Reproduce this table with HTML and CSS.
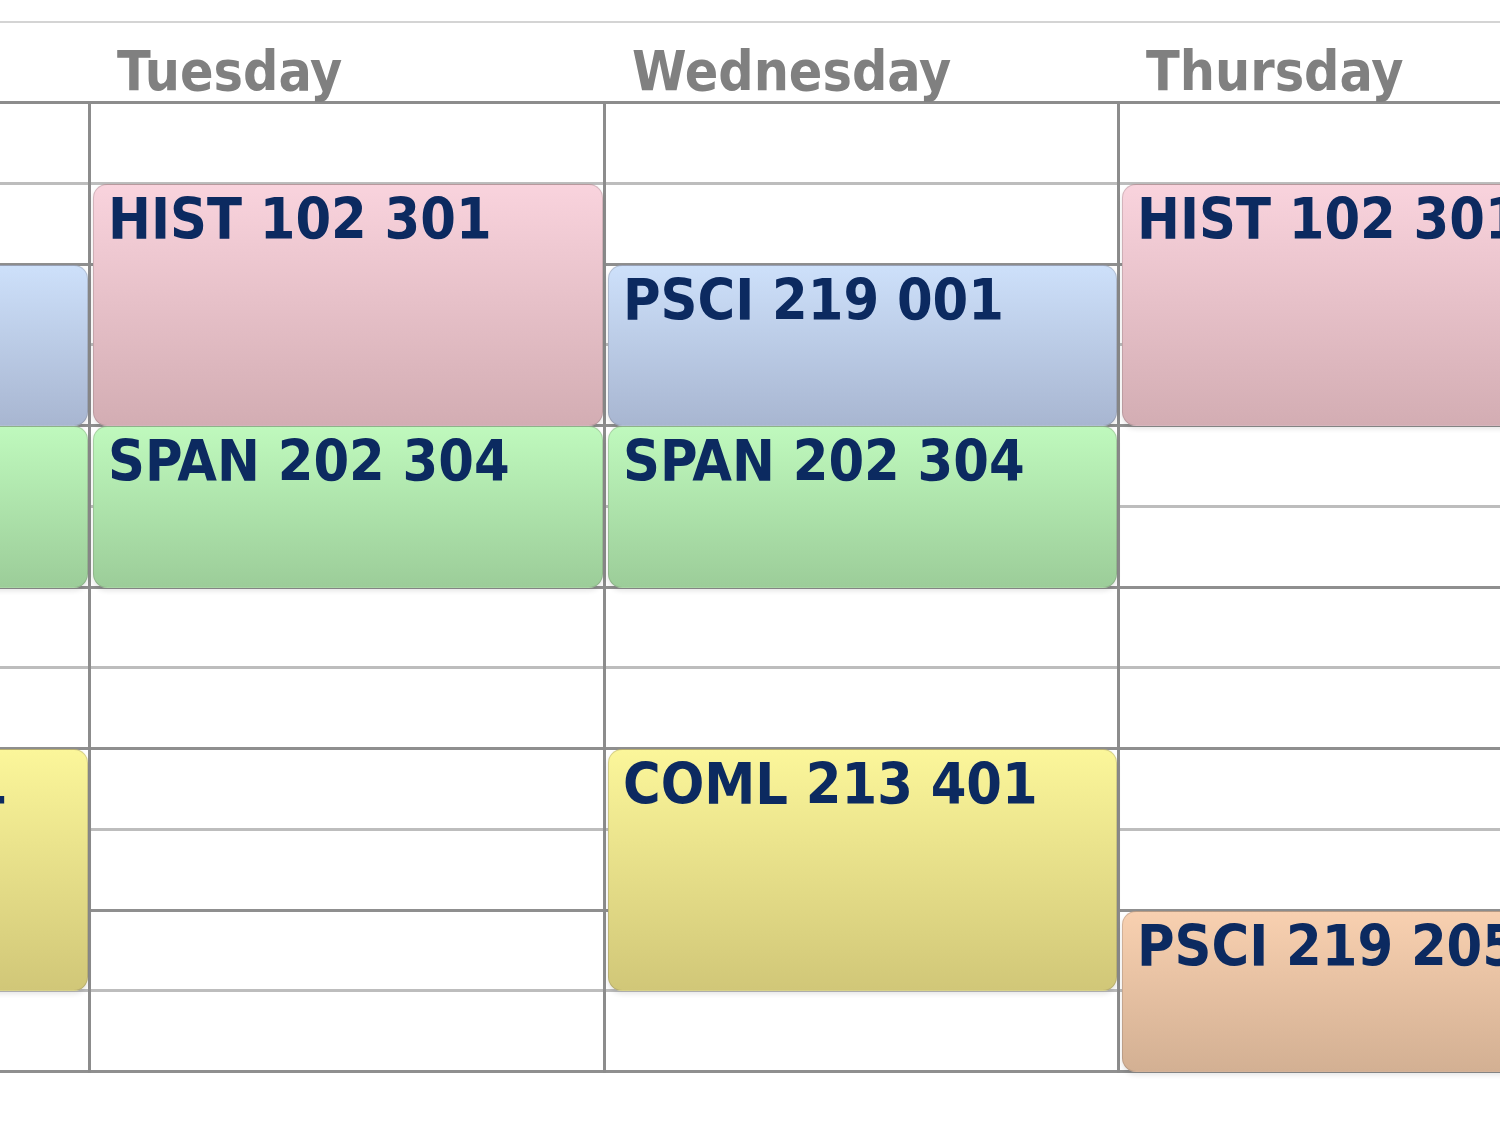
FILE: index.html
```html
<!DOCTYPE html>
<html lang="en">
<head>
<meta charset="utf-8">
<title>Week schedule</title>
<link rel="stylesheet" href="styles.css">
</head>
<body>
<div class="viewport">
  <div class="week">
    <div class="day-head">Monday</div>
    <div class="day-head">Tuesday</div>
    <div class="day-head">Wednesday</div>
    <div class="day-head">Thursday</div>

    <div class="day">
      <div class="slot r1"></div><div class="slot r2"></div><div class="slot r3"></div><div class="slot r4"></div>
      <div class="slot r5"></div><div class="slot r6"></div><div class="slot r7"></div><div class="slot r8"></div>
      <div class="slot r9"></div><div class="slot r10"></div><div class="slot r11"></div><div class="slot r12"></div>
      <div class="event blue s3 e5">PSCI 219 001</div>
      <div class="event green s5 e7">SPAN 202 304</div>
      <div class="event yellow s9 e12">COML 213 401</div>
    </div>

    <div class="day">
      <div class="slot r1"></div><div class="slot r2"></div><div class="slot r3"></div><div class="slot r4"></div>
      <div class="slot r5"></div><div class="slot r6"></div><div class="slot r7"></div><div class="slot r8"></div>
      <div class="slot r9"></div><div class="slot r10"></div><div class="slot r11"></div><div class="slot r12"></div>
      <div class="event pink s2 e5">HIST 102 301</div>
      <div class="event green s5 e7">SPAN 202 304</div>
    </div>

    <div class="day">
      <div class="slot r1"></div><div class="slot r2"></div><div class="slot r3"></div><div class="slot r4"></div>
      <div class="slot r5"></div><div class="slot r6"></div><div class="slot r7"></div><div class="slot r8"></div>
      <div class="slot r9"></div><div class="slot r10"></div><div class="slot r11"></div><div class="slot r12"></div>
      <div class="event blue s3 e5">PSCI 219 001</div>
      <div class="event green s5 e7">SPAN 202 304</div>
      <div class="event yellow s9 e12">COML 213 401</div>
    </div>

    <div class="day">
      <div class="slot r1"></div><div class="slot r2"></div><div class="slot r3"></div><div class="slot r4"></div>
      <div class="slot r5"></div><div class="slot r6"></div><div class="slot r7"></div><div class="slot r8"></div>
      <div class="slot r9"></div><div class="slot r10"></div><div class="slot r11"></div><div class="slot r12"></div>
      <div class="event pink s2 e5">HIST 102 301</div>
      <div class="event orange s11 e13">PSCI 219 205</div>
    </div>
  </div>
</div>
</body>
</html>
```
FILE: styles.css
```css
html, body {
  margin: 0;
  padding: 0;
  background: #ffffff;
}

body {
  padding-top: 21px;
  font-family: "DejaVu Sans Condensed", "DejaVu Sans", sans-serif;
  font-stretch: condensed;
}

.viewport {
  width: 1500px;
  overflow: hidden;
  border-top: 2px solid #d4d4d4;
  height: 1102px;
}

.week {
  display: grid;
  grid-template-columns: 515px 515px 514px 515px;
  grid-template-rows: auto auto;
  margin-left: -427px;
  width: 2059px;
}

.day-head {
  border-bottom: 3px solid #8c8c8c;
  padding-left: 29px;
  padding-top: 21px;
  font-weight: bold;
  font-size: 55px;
  line-height: 1;
  color: #808080;
  box-sizing: border-box;
  height: 81px;
}

.day {
  display: grid;
  grid-template-columns: 100%;
  grid-template-rows: repeat(12, 80.75px);
  border-left: 3px solid #8c8c8c;
}

.slot {
  grid-column: 1;
  box-sizing: border-box;
  border-bottom: 3px solid #8f8f8f;
}
.r1, .r3, .r5, .r7, .r9, .r11 { border-bottom-color: #bdbdbd; }
.r1 { grid-row: 1; } .r2 { grid-row: 2; } .r3 { grid-row: 3; } .r4 { grid-row: 4; }
.r5 { grid-row: 5; } .r6 { grid-row: 6; } .r7 { grid-row: 7; } .r8 { grid-row: 8; }
.r9 { grid-row: 9; } .r10 { grid-row: 10; } .r11 { grid-row: 11; } .r12 { grid-row: 12; }

.event {
  grid-column: 1;
  z-index: 1;
  margin: -1px 0 1px 2px;
  border-radius: 14px;
  border: 1px solid rgba(90, 80, 80, 0.22);
  box-shadow: 0 3px 5px rgba(0, 0, 0, 0.10);
  padding: 6px 0 0 14px;
  font-size: 57px;
  font-weight: bold;
  line-height: 1;
  color: #0c2a60;
  white-space: nowrap;
  overflow: hidden;
}

.s2 { grid-row-start: 2; }
.s3 { grid-row-start: 3; }
.s5 { grid-row-start: 5; }
.s9 { grid-row-start: 9; }
.s11 { grid-row-start: 11; }
.e5 { grid-row-end: 5; }
.e7 { grid-row-end: 7; }
.e12 { grid-row-end: 12; }
.e13 { grid-row-end: 13; }

.pink   { background: linear-gradient(#f9d3dd, #d3adb3); }
.blue   { background: linear-gradient(#cde0fa, #a8b6d1); }
.green  { background: linear-gradient(#bff9bd, #9ccd99); }
.yellow { background: linear-gradient(#fbf69a, #d1c778); }
.orange { background: linear-gradient(#f8d0b0, #d3b093); }
```
